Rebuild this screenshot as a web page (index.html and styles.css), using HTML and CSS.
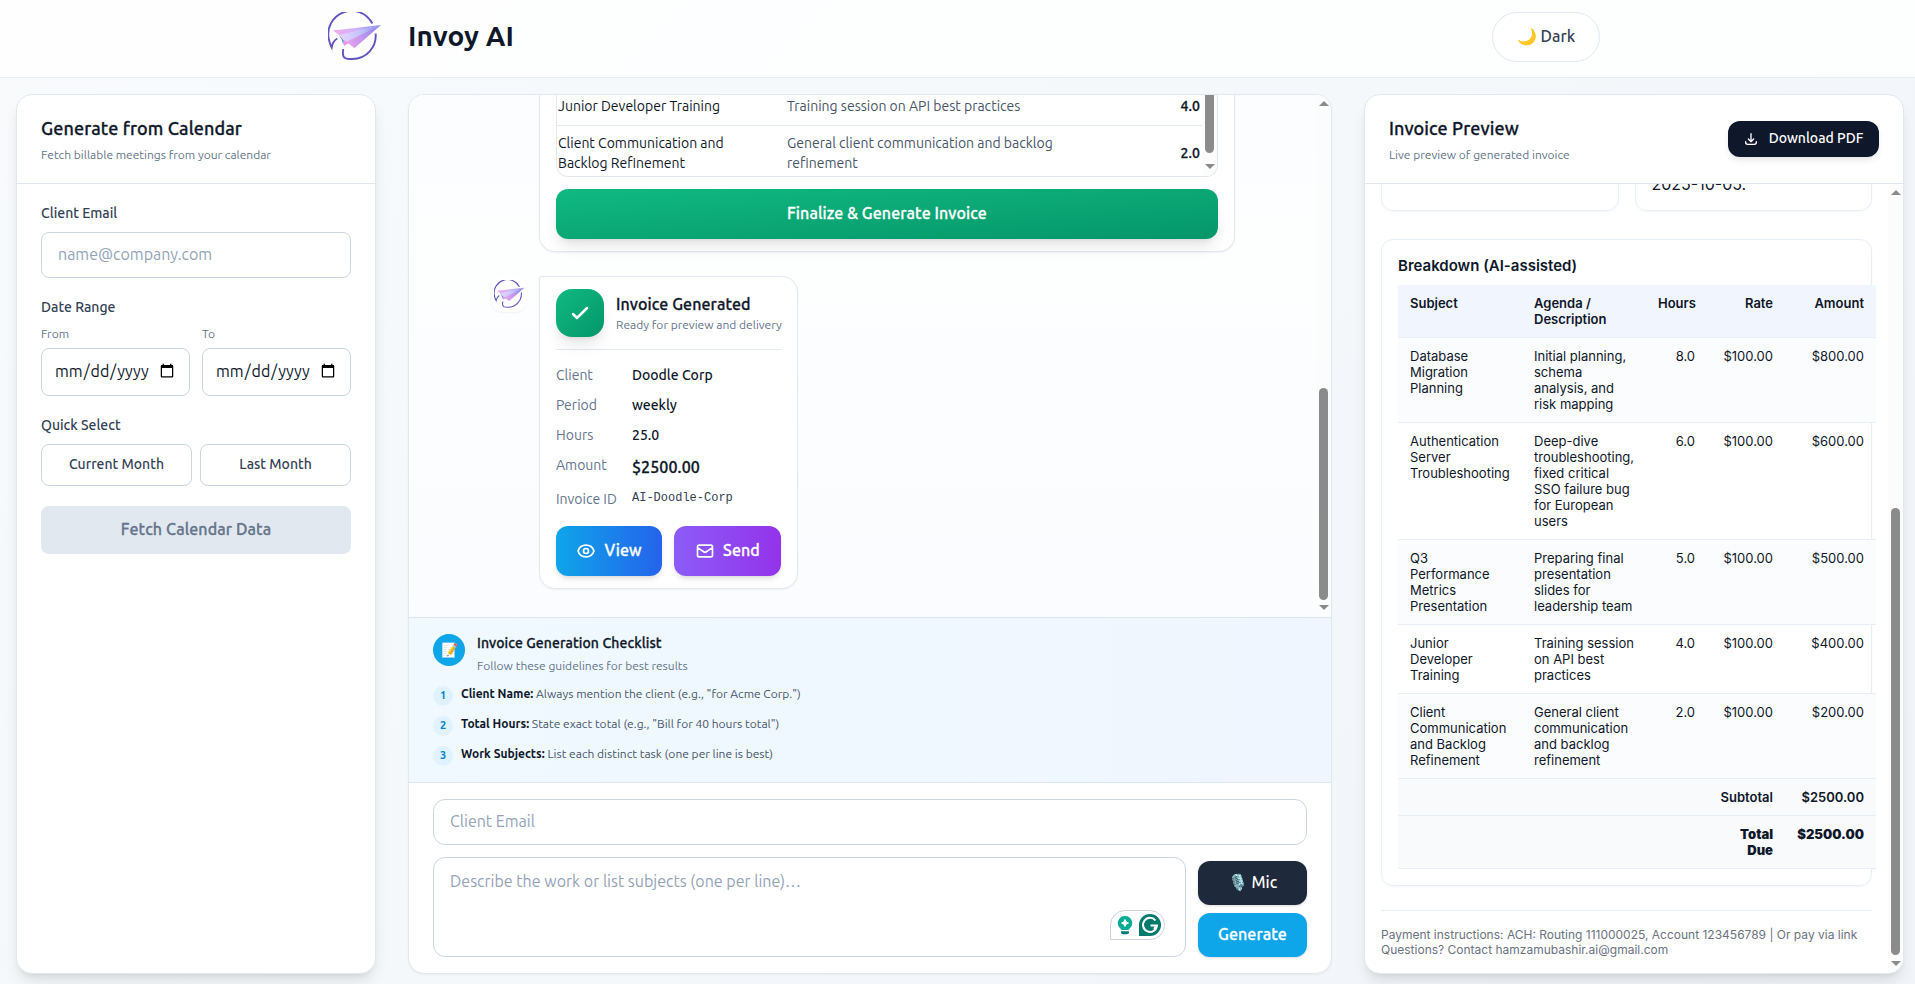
FILE: index.html
```html
<!DOCTYPE html>
<html lang="en">

<head>
    <meta charset="UTF-8">
    <title>Invoy AI</title>
    <link rel="stylesheet" href="styles.css">
</head>

<body>
    <svg class="defs" width="0" height="0">
        <defs>
            <linearGradient id="wingTop" x1="0" y1="0" x2="1" y2="0">
                <stop offset="0" stop-color="#f3a9ee" />
                <stop offset="0.5" stop-color="#cdb4f6" />
                <stop offset="1" stop-color="#7d86f0" />
            </linearGradient>
            <linearGradient id="wingMid" x1="0" y1="0" x2="1" y2="0">
                <stop offset="0" stop-color="#e9d3fb" />
                <stop offset="0.5" stop-color="#c3c6fb" />
                <stop offset="1" stop-color="#8c86ee" />
            </linearGradient>
            <linearGradient id="wingLow" x1="0" y1="0" x2="1" y2="0">
                <stop offset="0" stop-color="#eda6ec" />
                <stop offset="1" stop-color="#8b83ec" />
            </linearGradient>
        </defs>
        <symbol id="logo" viewBox="0 0 54 48">
            <path d="M44.300 11.500A23.300 23.300 0 0 0 .9 27.500Q1.600 31.500 3.700 35.500Q4.800 29 9.300 26.500M47.600 21.500A23.300 23.300 0 0 1 24.500 47C17.500 47.300 14.800 46 14.900 41L15.200 37" fill="none" stroke="#5f55c0" stroke-width="1.900" />
            <path d="M5 18.500L53 13L19 22L12 23.500Z" fill="url(#wingTop)" />
            <path d="M11 23L53 13L18.500 32.500L15.500 28.500Z" fill="url(#wingMid)" />
            <path d="M18 30L53 13L26.500 36Z" fill="url(#wingLow)" />
            <path d="M15.500 28L20.500 31L16 34Z" fill="#ee92dc" />
            <path d="M10.500 22.500L15.500 28.500L15.300 33Q14.500 27.500 10.500 22.500Z" fill="#2f7fe8" />
        </symbol>
    </svg>

    <header class="topbar">
        <div class="topbar-inner">
            <div class="brand">
                <svg class="brand-logo"><use href="#logo" /></svg>
                <h1 class="brand-name">Invoy AI</h1>
            </div>
            <button class="theme-toggle" type="button">🌙 Dark</button>
        </div>
    </header>

    <main class="layout">
        <section class="card calendar">
            <div class="card-header">
                <h2 class="card-title">Generate from Calendar</h2>
                <p class="card-subtitle">Fetch billable meetings from your calendar</p>
            </div>
            <div class="calendar-body">
                <label class="label" for="email">Client Email</label>
                <input class="input" id="email" type="email" placeholder="name@company.com">
                <div class="label">Date Range</div>
                <div class="dates">
                    <div class="date-field">
                        <label class="small-label" for="from">From</label>
                        <input class="input date" id="from" type="date">
                    </div>
                    <div class="date-field">
                        <label class="small-label" for="to">To</label>
                        <input class="input date" id="to" type="date">
                    </div>
                </div>
                <div class="label">Quick Select</div>
                <div class="quick">
                    <button class="button-quick" type="button">Current Month</button>
                    <button class="button-quick" type="button">Last Month</button>
                </div>
                <button class="button-fetch" type="button">Fetch Calendar Data</button>
            </div>
        </section>

        <section class="card chat">
            <div class="scroll-row chat-scroll">
                <div class="messages">
                    <div class="bubble draft">
                        <div class="draft-table">
                            <div class="draft-rows">
                                <div class="draft-row">
                                    <span class="draft-subject">Junior Developer Training</span>
                                    <span class="draft-desc">Training session on API best practices</span>
                                    <span class="draft-hours">4.0</span>
                                </div>
                                <div class="draft-row">
                                    <span class="draft-subject">Client Communication and Backlog Refinement</span>
                                    <span class="draft-desc">General client communication and backlog refinement</span>
                                    <span class="draft-hours">2.0</span>
                                </div>
                            </div>
                            <div class="scrollbar">
                                <span class="thumb thumb-draft"></span>
                                <span class="arrow arrow-down"></span>
                            </div>
                        </div>
                        <button class="button-finalize" type="button">Finalize &amp; Generate Invoice</button>
                    </div>
                    <div class="message">
                        <div class="avatar"><svg class="avatar-logo"><use href="#logo" /></svg></div>
                        <div class="bubble generated">
                            <div class="generated-head">
                                <div class="check">
                                    <svg width="24" height="24" viewBox="0 0 24 24" fill="none" stroke="#fff" stroke-width="2.500" stroke-linecap="round" stroke-linejoin="round"><path d="M5 13l4 4L19 7" /></svg>
                                </div>
                                <div>
                                    <h3 class="generated-title">Invoice Generated</h3>
                                    <p class="generated-sub">Ready for preview and delivery</p>
                                </div>
                            </div>
                            <dl class="facts">
                                <dt>Client</dt>
                                <dd>Doodle Corp</dd>
                                <dt>Period</dt>
                                <dd>weekly</dd>
                                <dt>Hours</dt>
                                <dd>25.0</dd>
                                <dt>Amount</dt>
                                <dd class="amount">$2500.00</dd>
                                <dt>Invoice ID</dt>
                                <dd class="invoice-id">AI-Doodle-Corp</dd>
                            </dl>
                            <div class="actions">
                                <button class="button-action view" type="button">
                                    <svg width="20" height="20" viewBox="0 0 24 24" fill="none" stroke="#fff" stroke-width="2" stroke-linecap="round" stroke-linejoin="round"><path d="M15 12a3 3 0 11-6 0 3 3 0 016 0z" /><path d="M2.458 12C3.732 7.943 7.523 5 12 5c4.478 0 8.268 2.943 9.542 7-1.274 4.057-5.064 7-9.542 7-4.477 0-8.268-2.943-9.542-7z" /></svg>
                                    <span>View</span>
                                </button>
                                <button class="button-action send" type="button">
                                    <svg width="20" height="20" viewBox="0 0 24 24" fill="none" stroke="#fff" stroke-width="2" stroke-linecap="round" stroke-linejoin="round"><path d="M3 8l7.890 5.260a2 2 0 002.220 0L21 8M5 19h14a2 2 0 002-2V7a2 2 0 00-2-2H5a2 2 0 00-2 2v10a2 2 0 002 2z" /></svg>
                                    <span>Send</span>
                                </button>
                            </div>
                        </div>
                    </div>
                </div>
                <div class="scrollbar">
                    <span class="arrow arrow-up"></span>
                    <span class="thumb thumb-chat"></span>
                    <span class="arrow arrow-down"></span>
                </div>
            </div>

            <div class="checklist">
                <div class="checklist-head">
                    <div class="checklist-icon">📝</div>
                    <div>
                        <h4 class="checklist-title">Invoice Generation Checklist</h4>
                        <p class="checklist-sub">Follow these guidelines for best results</p>
                    </div>
                </div>
                <ol class="steps">
                    <li class="step"><span class="step-no">1</span><p><strong>Client Name:</strong> Always mention the client (e.g., "for Acme Corp.")</p></li>
                    <li class="step"><span class="step-no">2</span><p><strong>Total Hours:</strong> State exact total (e.g., "Bill for 40 hours total")</p></li>
                    <li class="step"><span class="step-no">3</span><p><strong>Work Subjects:</strong> List each distinct task (one per line is best)</p></li>
                </ol>
            </div>

            <div class="composer">
                <input class="input composer-email" type="email" placeholder="Client Email">
                <div class="composer-row">
                    <div class="composer-text">
                        <textarea class="input" placeholder="Describe the work or list subjects (one per line)…"></textarea>
                        <div class="grammar">
                            <svg width="16" height="20" viewBox="0 0 16 20"><path d="M8 1a7.200 7.200 0 0 0-4.500 12.800c.7.600 1 .900 1 1.200h7c0-.300.300-.600 1-1.200A7.200 7.200 0 0 0 8 1z" fill="#0cab93" /><path d="M8 4.500Q8.500 7.500 11.500 8Q8.500 8.500 8 11.500Q7.500 8.500 4.500 8Q7.500 7.500 8 4.500z" fill="#fff" stroke="#fff" /><path d="M4 16.200h8v1a2 2 0 0 1-2 2H6a2 2 0 0 1-2-2z" fill="#067d72" /></svg>
                            <svg width="22" height="22" viewBox="0 0 22 22"><path d="M0 22V11a11 11 0 1 1 11 11z" fill="#047a6c" /><path d="M16.500 6.500A7 7 0 1 0 18 11.500H11.500M18 11.500L15 15" fill="none" stroke="#fff" stroke-width="2" /></svg>
                        </div>
                    </div>
                    <div class="composer-buttons">
                        <button class="button-mic" type="button">🎙️ Mic</button>
                        <button class="button-generate" type="button">Generate</button>
                    </div>
                </div>
            </div>
        </section>

        <section class="card preview">
            <div class="card-header">
                <div>
                    <h2 class="card-title preview-title">Invoice Preview</h2>
                    <p class="card-subtitle">Live preview of generated invoice</p>
                </div>
                <button class="button-download" type="button">
                    <svg width="16" height="16" viewBox="0 0 24 24" fill="none" stroke="#fff" stroke-width="2" stroke-linecap="round" stroke-linejoin="round"><path d="M4 16v1a3 3 0 003 3h10a3 3 0 003-3v-1m-4-4l-4 4m0 0l-4-4m4 4V4" /></svg>
                    <span>Download PDF</span>
                </button>
            </div>
            <div class="scroll-row preview-scroll">
                <div class="invoice">
                    <div class="invoice-cards">
                        <div class="invoice-card"></div>
                        <div class="invoice-card">2025-10-05.</div>
                    </div>
                    <div class="breakdown">
                        <h3 class="breakdown-title">Breakdown (AI-assisted)</h3>
                        <table class="items">
                            <colgroup>
                                <col class="col-text">
                                <col class="col-text">
                                <col class="col-hours">
                                <col class="col-rate">
                                <col class="col-amount">
                            </colgroup>
                            <thead>
                                <tr><th>Subject</th><th>Agenda / Description</th><th class="num">Hours</th><th class="num">Rate</th><th class="num">Amount</th></tr>
                            </thead>
                            <tbody>
                                <tr><td>Database Migration Planning</td><td>Initial planning, schema analysis, and risk mapping</td><td class="num">8.0</td><td class="num">$100.00</td><td class="num">$800.00</td></tr>
                                <tr><td>Authentication Server Troubleshooting</td><td>Deep-dive troubleshooting, fixed critical SSO failure bug for European users</td><td class="num">6.0</td><td class="num">$100.00</td><td class="num">$600.00</td></tr>
                                <tr><td>Q3 Performance Metrics Presentation</td><td>Preparing final presentation slides for leadership team</td><td class="num">5.0</td><td class="num">$100.00</td><td class="num">$500.00</td></tr>
                                <tr><td>Junior Developer Training</td><td>Training session on API best practices</td><td class="num">4.0</td><td class="num">$100.00</td><td class="num">$400.00</td></tr>
                                <tr><td>Client Communication and Backlog Refinement</td><td>General client communication and backlog refinement</td><td class="num">2.0</td><td class="num">$100.00</td><td class="num">$200.00</td></tr>
                            </tbody>
                            <tfoot>
                                <tr><td colspan="3"></td><td class="num">Subtotal</td><td class="num">$2500.00</td></tr>
                                <tr class="total"><td colspan="3"></td><td class="num">Total Due</td><td class="num">$2500.00</td></tr>
                            </tfoot>
                        </table>
                    </div>
                    <div class="invoice-footer">
                        <div>Payment instructions: ACH: Routing 111000025, Account 123456789 | Or pay via link</div>
                        <div>Questions? Contact hamzamubashir.ai@gmail.com</div>
                    </div>
                </div>
                <div class="scrollbar">
                    <span class="arrow arrow-up"></span>
                    <span class="thumb thumb-preview"></span>
                    <span class="arrow arrow-down"></span>
                </div>
            </div>
        </section>
    </main>
</body>

</html>
```

FILE: styles.css
```css
* {
    box-sizing: border-box;
}

body {
    margin: 0;
    height: 984px;
    overflow: hidden;
    font-family: Ubuntu, "Open Sans", "Noto Sans", sans-serif;
    font-size: 16px;
    line-height: 24px;
    color: #0f172a;
    background: linear-gradient(135deg, #f8fafc 0%, #f4f8fb 50%, #f1f5f9 100%);
}

h1, h2, h3, h4, p, dl, dd, ol {
    margin: 0;
    padding: 0;
}

button, input, textarea {
    font-family: inherit;
    font-size: 16px;
}

button {
    border: none;
    padding: 0 0 2px;
    line-height: 24px;
}

/* semibold: Ubuntu has nothing between 500 and 700 */
.card-title,
.button-fetch,
.draft-hours,
.button-finalize,
.generated-title,
.facts .amount,
.button-action,
.checklist-title,
.button-generate {
    font-weight: 500;
    letter-spacing: 0.1px;
    -webkit-text-stroke: 0.3px currentColor;
}

.defs {
    position: absolute;
}

.topbar {
    height: 78px;
    background: rgba(255, 255, 255, 0.8);
    border-bottom: 1px solid #e9eef4;
}

.topbar-inner {
    display: flex;
    align-items: flex-start;
    justify-content: space-between;
    width: 1272px;
    margin-left: 328px;
    padding-top: 12px;
}

.brand {
    display: flex;
    align-items: center;
    gap: 26px;
}

.brand-logo {
    width: 54px;
    height: 48px;
}

.brand-name {
    font-size: 28px;
    line-height: 48px;
    font-weight: 700;
    letter-spacing: 0.1px;
}

.theme-toggle {
    width: 108px;
    height: 50px;
    border: 1px solid #e2e8f0;
    border-radius: 25px;
    background: #fff;
    color: #334155;
    font-weight: 500;
}

.layout {
    display: grid;
    grid-template-columns: 360px 924px 540px;
    grid-template-rows: 880px;
    gap: 32px;
    padding: 16px;
}

.card {
    display: flex;
    flex-direction: column;
    overflow: hidden;
    background: #fff;
    border: 1px solid #e2e8f0;
    border-radius: 16px;
    box-shadow: 0 10px 15px -3px rgba(0, 0, 0, 0.1), 0 4px 6px -4px rgba(0, 0, 0, 0.1);
}

.card-header {
    display: flex;
    flex-shrink: 0;
    align-items: center;
    justify-content: space-between;
    height: 89px;
    padding: 0 24px;
    border-bottom: 1px solid #e2e8f0;
}

.calendar .card-header {
    display: block;
    padding-top: 19px;
}

.card-title {
    font-size: 18px;
    line-height: 28px;
}

.preview-title {
    margin-top: -1px;
}

.card-subtitle {
    margin-top: 5px;
    font-size: 12px;
    line-height: 16px;
    color: #64748b;
}

/* calendar form */
.calendar-body {
    display: flex;
    flex-direction: column;
    padding: 19px 24px;
}

.label {
    margin-bottom: 9px;
    font-size: 14px;
    line-height: 20px;
    font-weight: 500;
    color: #334155;
}

.input {
    display: block;
    width: 100%;
    height: 46px;
    margin: 0;
    padding: 0 16px 2px;
    border: 1px solid #cbd5e1;
    border-radius: 8px;
    background: #fff;
    color: #0f172a;
    outline: none;
}

.input::placeholder {
    color: #94a3b8;
}

.calendar-body > .input {
    margin-bottom: 19px;
}

.dates {
    display: flex;
    gap: 12px;
    margin-bottom: 19px;
}

.date-field {
    flex: 1;
    min-width: 0;
}

.small-label {
    display: block;
    margin-bottom: 6px;
    font-size: 12px;
    line-height: 16px;
    color: #64748b;
}

.date {
    height: 48px;
    padding: 0 12px 2px;
}

.quick {
    display: flex;
    gap: 8px;
    margin-bottom: 20px;
}

.button-quick {
    flex: 1;
    height: 42px;
    border: 1px solid #cbd5e1;
    border-radius: 8px;
    background: #fff;
    color: #334155;
    font-size: 14px;
    font-weight: 500;
}

.button-fetch {
    height: 48px;
    border-radius: 8px;
    background: #e2e8f0;
    color: #64748b;
}

/* scroll areas */
.scroll-row {
    display: flex;
    min-height: 0;
    overflow: hidden;
}

.scrollbar {
    position: relative;
    flex: none;
    width: 15px;
    background: #fcfcfc;
}

.thumb {
    position: absolute;
    left: 3px;
    width: 9px;
    border-radius: 5px;
    background: #8b8b8b;
}

.thumb-chat {
    top: 293px;
    height: 212px;
}

.thumb-draft {
    top: 0;
    height: 58px;
    border-radius: 0 0 5px 5px;
}

.thumb-preview {
    top: 324px;
    height: 447px;
}

.arrow {
    position: absolute;
    left: 2.5px;
    border: 5px solid transparent;
}

.arrow-up {
    top: 1px;
    border-bottom: 5px solid #8b8b8b;
}

.arrow-down {
    bottom: 2px;
    border-top: 5px solid #8b8b8b;
}

/* chat */
.chat {
    box-shadow: 0 1px 2px rgba(0, 0, 0, 0.05);
}

.chat-scroll {
    height: 522px;
    background: linear-gradient(#fcfdff, #fdfefe 30%, #fbfcff);
}

.messages {
    display: flex;
    flex: 1;
    flex-direction: column;
    justify-content: flex-end;
    gap: 24px;
    padding: 0 81px 28px 82px;
}

.bubble {
    border: 1px solid #e2e8f0;
    border-radius: 16px;
    background: #fff;
    box-shadow: 0 1px 2px rgba(0, 0, 0, 0.05);
}

.draft {
    margin-left: 48px;
    padding: 0 16px 12px;
    border-top: none;
    border-radius: 0 0 16px 16px;
}

.draft-table {
    display: flex;
    overflow: hidden;
    height: 82px;
    margin-bottom: 12px;
    border: 1px solid #e2e8f0;
    border-top: none;
    border-radius: 0 0 12px 12px;
}

.draft-rows {
    flex: 1;
    font-size: 14px;
    line-height: 20px;
}

.draft-row {
    display: flex;
    align-items: center;
    padding: 7px 2px 7px 1px;
}

.draft-row:first-child {
    height: 31px;
    padding: 0 2px 8px 1px;
    border-bottom: 1px solid #e2e8f0;
}

.draft-subject {
    width: 229px;
    padding-right: 50px;
}

.draft-row:first-child .draft-subject {
    padding-right: 0;
}

.draft-desc {
    width: 290px;
    color: #475569;
}

.draft-hours {
    margin-left: auto;
}

.button-finalize {
    display: block;
    width: 100%;
    height: 50px;
    border-radius: 12px;
    background: linear-gradient(to bottom right, #10b981, #059669);
    box-shadow: 0 10px 15px -3px rgba(0, 0, 0, 0.1), 0 4px 6px -4px rgba(0, 0, 0, 0.1);
    color: #fff;
}

.message {
    display: flex;
    align-items: flex-start;
    gap: 12px;
}

.avatar {
    display: flex;
    align-items: center;
    justify-content: center;
    width: 36px;
    height: 36px;
    border-radius: 12px;
    background: #fff;
    box-shadow: 0 1px 2px rgba(0, 0, 0, 0.05);
}

.avatar-logo {
    width: 31px;
    height: 28px;
}

.generated {
    width: 259px;
    height: 313px;
    padding: 12px 16px;
    border-top-left-radius: 2px;
}

.generated-head {
    display: flex;
    gap: 12px;
    height: 61px;
    border-bottom: 1px solid #e2e8f0;
    white-space: nowrap;
}

.check {
    display: flex;
    align-items: center;
    justify-content: center;
    flex: none;
    width: 48px;
    height: 48px;
    border-radius: 16px;
    background: linear-gradient(to bottom right, #10b981, #059669);
    box-shadow: 0 10px 15px -3px rgba(0, 0, 0, 0.1), 0 4px 6px -4px rgba(0, 0, 0, 0.1);
}

.generated-title {
    padding-top: 3px;
    font-size: 16px;
    line-height: 24px;
}

.generated-sub {
    margin-top: 1px;
    font-size: 12px;
    line-height: 16px;
    color: #64748b;
}

.facts {
    display: grid;
    grid-template-columns: 60px 1fr;
    gap: 10px 16px;
    margin-top: 15px;
    font-size: 14px;
    line-height: 20px;
    white-space: nowrap;
}

.facts dt {
    color: #64748b;
}

.facts dd {
    font-weight: 500;
}

.facts .amount {
    font-size: 16px;
    line-height: 24px;
}

.facts .invoice-id {
    font-family: "Liberation Mono", monospace;
    font-size: 12px;
    line-height: 18px;
    font-weight: 400;
    color: #334155;
}

.actions {
    display: flex;
    gap: 12px;
    margin-top: 17px;
}

.button-action {
    display: flex;
    align-items: center;
    justify-content: center;
    gap: 8px;
    width: 107px;
    height: 50px;
    padding-bottom: 0;
    border-radius: 12px;
    box-shadow: 0 4px 6px -1px rgba(0, 0, 0, 0.1), 0 2px 4px -2px rgba(0, 0, 0, 0.1);
    color: #fff;
}

.button-action span,
.button-download span {
    padding-bottom: 2px;
}

.view {
    width: 106px;
    background: linear-gradient(to right, #0ea5e9, #2563eb);
}

.send {
    background: linear-gradient(to right, #8b5cf6, #9333ea);
}

/* checklist */
.checklist {
    height: 165px;
    padding: 16px 24px 0;
    border-top: 1px solid #dbe6f1;
    background: linear-gradient(to right, #f0f9ff, #eff6ff);
}

.checklist-head {
    display: flex;
    gap: 12px;
}

.checklist-icon {
    width: 32px;
    height: 32px;
    border-radius: 50%;
    background: #0ea5e9;
    font-size: 14px;
    line-height: 32px;
    text-align: center;
}

.checklist-title {
    margin-top: -1px;
    font-size: 14px;
    line-height: 20px;
}

.checklist-sub {
    margin-top: 5px;
    font-size: 12px;
    line-height: 16px;
    color: #64748b;
}

.steps {
    display: flex;
    flex-direction: column;
    gap: 10px;
    margin-top: 12px;
    list-style: none;
}

.step {
    display: flex;
    gap: 8px;
    height: 20px;
    font-size: 12px;
    line-height: 16px;
    color: #475569;
}

.step strong {
    color: #0f172a;
}

.step-no {
    width: 20px;
    height: 20px;
    border-radius: 50%;
    background: #e0f2fe;
    color: #0284c7;
    font-size: 11px;
    line-height: 19px;
    font-weight: 700;
    text-align: center;
}

/* composer */
.composer {
    flex: 1;
    padding: 16px 24px;
    border-top: 1px solid #dbe6f1;
}

.composer .input {
    border-radius: 12px;
}

.composer-row {
    display: flex;
    align-items: flex-end;
    gap: 12px;
    margin-top: 12px;
}

.composer-text {
    position: relative;
    flex: 1;
}

.composer-text textarea {
    height: 100px;
    padding: 11px 16px;
    line-height: 24px;
    resize: none;
}

/* writing assistant badge over the textarea */
.grammar {
    position: absolute;
    right: 21px;
    bottom: 17px;
    display: flex;
    align-items: center;
    gap: 6px;
    width: 55px;
    height: 30px;
    padding-left: 6px;
    border: 1px solid #ccd0dc;
    border-radius: 15px 15px 15px 0;
    background: #fff;
}

.composer-buttons {
    display: flex;
    flex-direction: column;
    gap: 8px;
    width: 109px;
}

.button-mic,
.button-generate {
    height: 44px;
    border-radius: 12px;
    box-shadow: 0 1px 3px rgba(0, 0, 0, 0.15);
    color: #fff;
}

.button-mic {
    background: #1e293b;
    font-weight: 500;
}

.button-generate {
    background: #0ea5e9;
}

/* invoice preview */
.button-download {
    display: flex;
    align-items: center;
    justify-content: center;
    gap: 10px;
    width: 151px;
    height: 36px;
    padding: 0 1px 0 0;
    border-radius: 12px;
    background: #0f172a;
    box-shadow: 0 4px 6px -1px rgba(0, 0, 0, 0.1);
    color: #fff;
    font-size: 14px;
    font-weight: 500;
}

.preview-scroll {
    flex: 1;
}

.invoice {
    display: flex;
    flex: none;
    flex-direction: column;
    justify-content: flex-end;
    width: 523px;
    padding: 0 16px 16px;
    font-family: Inter, sans-serif;
}

.invoice-cards {
    display: flex;
    flex: none;
    gap: 16px;
    margin-bottom: 28px;
}

.invoice-card {
    flex: 1;
    height: 60px;
    padding: 20px 16px 0;
    border: 1px solid #e6eef7;
    border-radius: 12px;
    box-shadow: 0 1px 2px rgba(15, 23, 42, 0.04);
    line-height: 24px;
}

.breakdown {
    flex: none;
    padding: 16px;
    border: 1px solid #e6eef7;
    border-radius: 12px;
    box-shadow: 0 1px 2px rgba(15, 23, 42, 0.04);
}

.breakdown-title {
    margin-bottom: 9px;
    font-size: 15px;
    line-height: 20px;
    font-weight: 600;
}

.items {
    width: 478px;
    table-layout: fixed;
    border-spacing: 0;
    font-size: 13px;
    line-height: 16px;
}

.col-text {
    width: 124px;
}

.col-hours {
    width: 61px;
}

.col-rate {
    width: 78px;
}

.col-amount {
    width: 91px;
}

.items th,
.items td {
    padding: 10px 12px;
    border-bottom: 1px solid #e8eef5;
    text-align: left;
    vertical-align: top;
}

.items .num {
    text-align: right;
}

.items th {
    background: #f1f6fe;
    font-weight: 600;
}

.items tbody tr:nth-child(odd) {
    background: #fbfcfe;
}

.items tfoot tr {
    background: #f8fafc;
    font-weight: 600;
}

.items tfoot .total {
    font-weight: 900;
}

.invoice-footer {
    flex: none;
    margin-top: 24px;
    padding-top: 16px;
    border-top: 1px solid #e6eef7;
    font-size: 12px;
    line-height: 15px;
    color: #6b7280;
}
```
